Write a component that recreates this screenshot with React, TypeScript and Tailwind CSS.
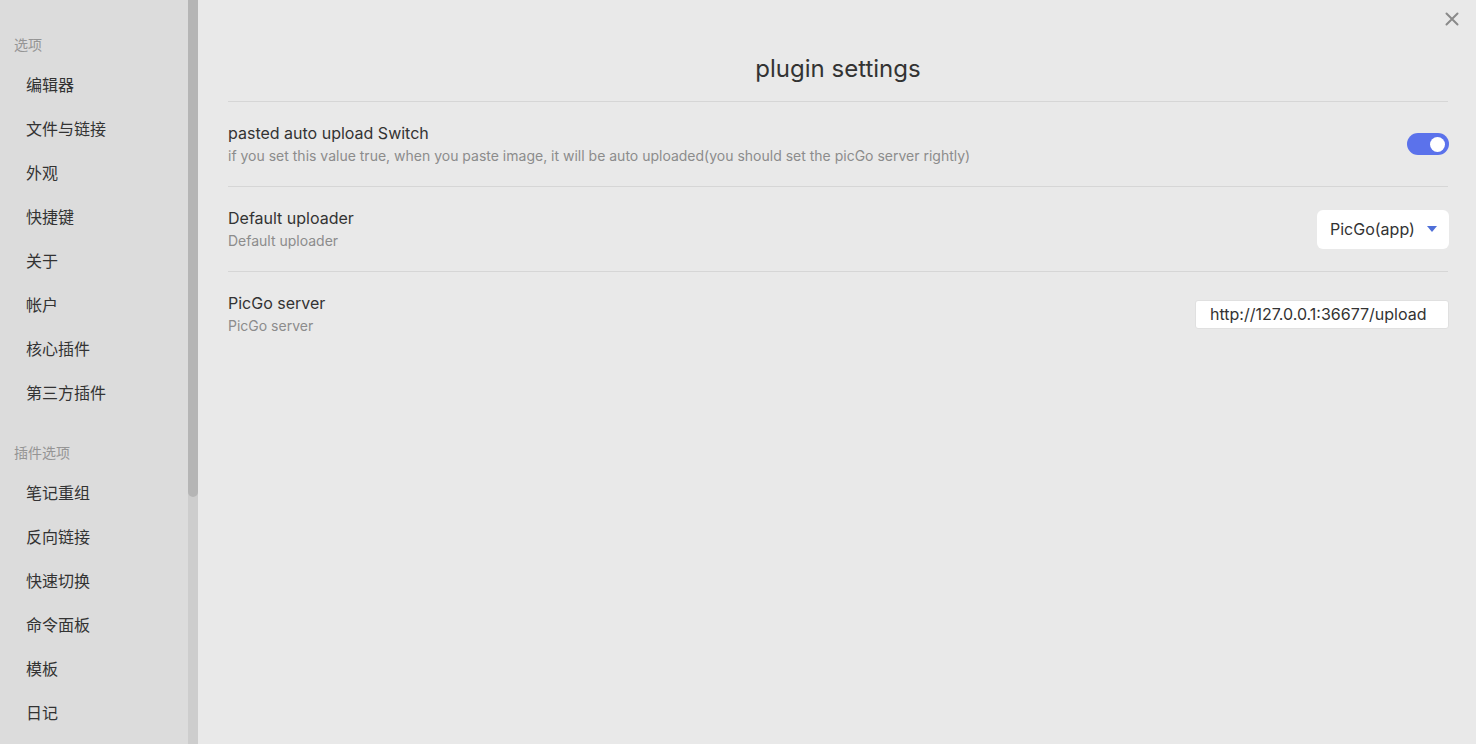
export default function App() {
  const core = ["编辑器", "文件与链接", "外观", "快捷键", "关于", "帐户", "核心插件", "第三方插件"];
  const plugins = ["笔记重组", "反向链接", "快速切换", "命令面板", "模板", "日记"];

  return (
    <div
      className="flex h-[744px] w-[1476px] overflow-hidden bg-[#e9e9e9] text-[#333333]"
      style={{ fontFamily: 'Inter, "Noto Sans CJK SC", sans-serif' }}
    >
      {/* sidebar */}
      <div className="flex w-[198px] shrink-0 bg-[#dcdcdc]">
        <div className="w-[188px] pt-[35px]">
          <div className="px-[14px] text-[14px] leading-[20px] text-[#959595]">选项</div>
          <div className="mt-[8px] flex flex-col">
            {core.map((item) => (
              <div key={item} className="px-[26px] py-[11px] text-[16px] leading-[22px]">
                {item}
              </div>
            ))}
          </div>
          <div className="mt-[28px] px-[14px] text-[14px] leading-[20px] text-[#959595]">插件选项</div>
          <div className="mt-[8px] flex flex-col">
            {plugins.map((item) => (
              <div key={item} className="px-[26px] py-[11px] text-[16px] leading-[22px]">
                {item}
              </div>
            ))}
          </div>
        </div>
        <div className="w-[10px] bg-[#cdcdcd]">
          <div className="h-[497px] rounded-b-[5px] bg-[#b5b5b5]" />
        </div>
      </div>

      {/* main */}
      <div className="relative flex-1 pl-[30px] pr-[28px] pt-[52px]">
        <button className="absolute right-[15px] top-[10px] text-[#8a8a8a]">
          <svg width="18" height="18" viewBox="0 0 18 18" fill="none" stroke="currentColor" strokeWidth="2" strokeLinecap="round">
            <path d="M3.5 3.5l11 11M14.5 3.5l-11 11" />
          </svg>
        </button>
        <h2 className="pb-[16px] text-center text-[24px] leading-[33px] text-[#333333]">plugin settings</h2>

        <div className="flex items-center border-t border-[#d6d6d6] py-[20px]">
          <div className="flex-1">
            <div className="text-[16px] leading-[22px]">pasted auto upload Switch</div>
            <div className="mt-[2px] text-[14px] leading-[20px] text-[#8c8c8c]">
              if you set this value true, when you paste image, it will be auto uploaded(you should set the picGo server rightly)
            </div>
          </div>
          <div className="-mr-[1px] flex h-[22px] w-[42px] items-center justify-end rounded-full bg-[#5b72eb] pr-[4px]">
            <div className="h-[15px] w-[15px] rounded-full bg-white" />
          </div>
        </div>

        <div className="flex items-center border-t border-[#d6d6d6] py-[20px]">
          <div className="flex-1">
            <div className="text-[16px] leading-[22px]">Default uploader</div>
            <div className="mt-[2px] text-[14px] leading-[20px] text-[#8c8c8c]">Default uploader</div>
          </div>
          <div className="-mr-[1px] flex h-[39px] w-[132px] items-center gap-[12px] rounded-[6px] bg-white pl-[13px] text-[16px]">
            <span>PicGo(app)</span>
            <svg width="10" height="6" viewBox="0 0 10 6">
              <path d="M0 0h10L5 6z" fill="#4f6fd8" />
            </svg>
          </div>
        </div>

        <div className="flex items-center border-t border-[#d6d6d6] py-[20px]">
          <div className="flex-1">
            <div className="text-[16px] leading-[22px]">PicGo server</div>
            <div className="mt-[2px] text-[14px] leading-[20px] text-[#8c8c8c]">PicGo server</div>
          </div>
          <input
            readOnly
            value="http://127.0.0.1:36677/upload"
            className="-mr-[1px] h-[29px] w-[254px] rounded-[3px] border border-[#e0e0e0] bg-white px-[14px] text-[16px] text-[#333333] outline-none"
          />
        </div>
      </div>
    </div>
  );
}
